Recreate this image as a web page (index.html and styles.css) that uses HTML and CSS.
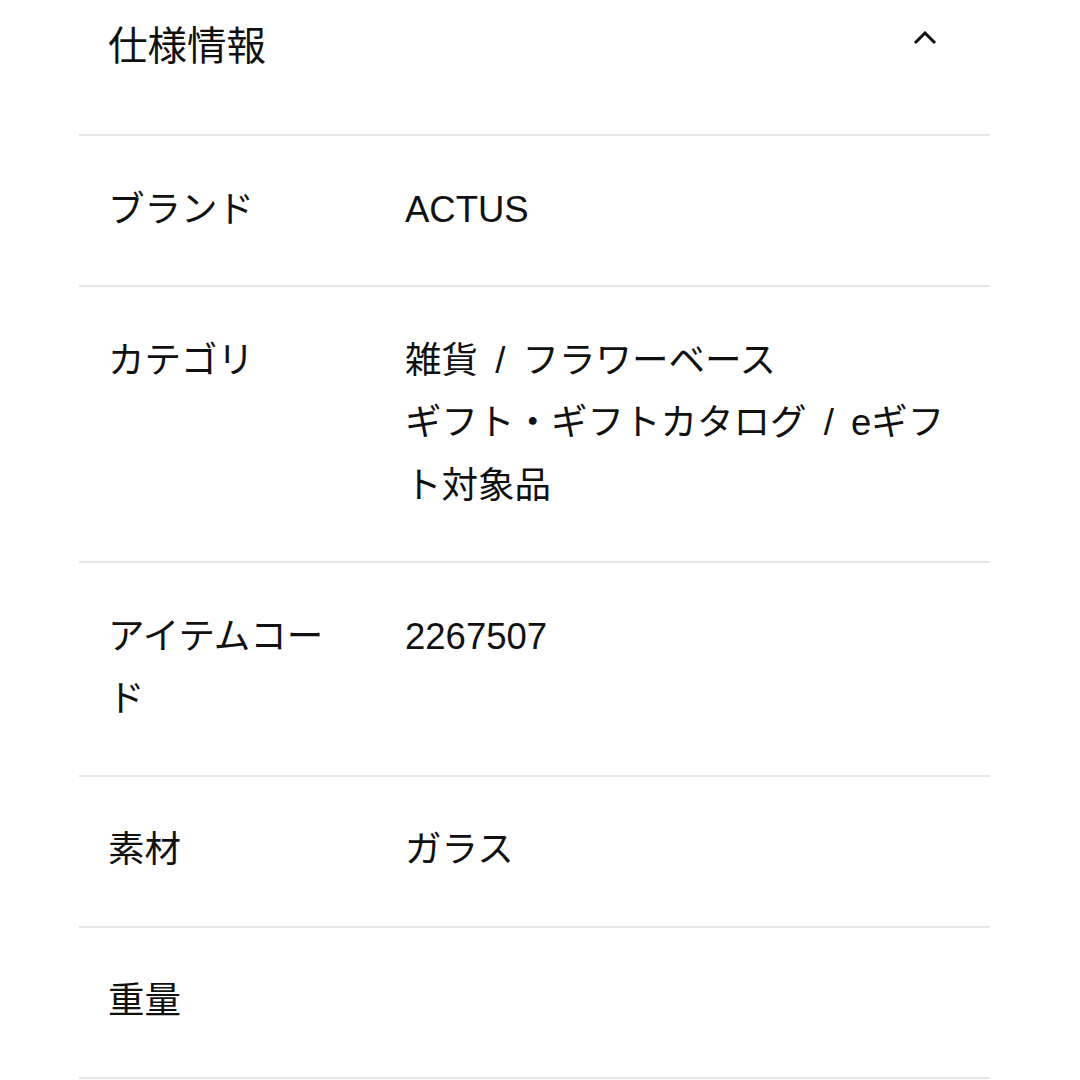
FILE: index.html
```html
<!DOCTYPE html>
<html lang="ja">
<head>
<meta charset="utf-8">
<link rel="stylesheet" href="styles.css">
</head>
<body>
<section class="spec">
  <div class="spec-head">
    <h2 class="spec-title">仕様情報</h2>
    <svg class="chev" width="24" height="14" viewBox="0 0 24 14"><path d="M2 12 L12 2 L22 12" fill="none" stroke="#111" stroke-width="3"/></svg>
  </div>
  <dl class="spec-list">
    <div class="row"><dt>ブランド</dt><dd>ACTUS</dd></div>
    <div class="row"><dt>カテゴリ</dt><dd>雑貨 / フラワーベース<br>ギフト・ギフトカタログ / eギフト対象品</dd></div>
    <div class="row"><dt>アイテムコード</dt><dd>2267507</dd></div>
    <div class="row"><dt>素材</dt><dd>ガラス</dd></div>
    <div class="row"><dt>重量</dt><dd></dd></div>
  </dl>
</section>
</body>
</html>
```
FILE: styles.css
```css
html, body {
  margin: 0;
  padding: 0;
  background: #fff;
}
body {
  font-family: "Liberation Sans", "Noto Sans CJK JP", "Noto Sans", sans-serif;
  color: #111;
}
.spec {
  margin-left: 79px;
  width: 911px;
}
.spec-head {
  display: flex;
  justify-content: space-between;
  align-items: flex-start;
  height: 134px;
  padding: 0 53px 0 29px;
  box-sizing: border-box;
}
.spec-title {
  margin: 0;
  padding-top: 14px;
  font-size: 39.5px;
  font-weight: 400;
  line-height: 64px;
}
.chev {
  margin-top: 31px;
}
.spec-list {
  margin: 0;
}
.row {
  display: grid;
  grid-template-columns: 297px 1fr;
  border-top: 2px solid #e6e6e6;
  padding: 42.5px 29px 44px 29px;
}
.row:last-child {
  border-bottom: 2px solid #e6e6e6;
}
.row dt, .row dd {
  margin: 0;
  font-size: 36.5px;
  line-height: 62.5px;
  min-height: 62.5px;
  word-spacing: 7px;
}
.row dt {
  padding-right: 60px;
}
```
